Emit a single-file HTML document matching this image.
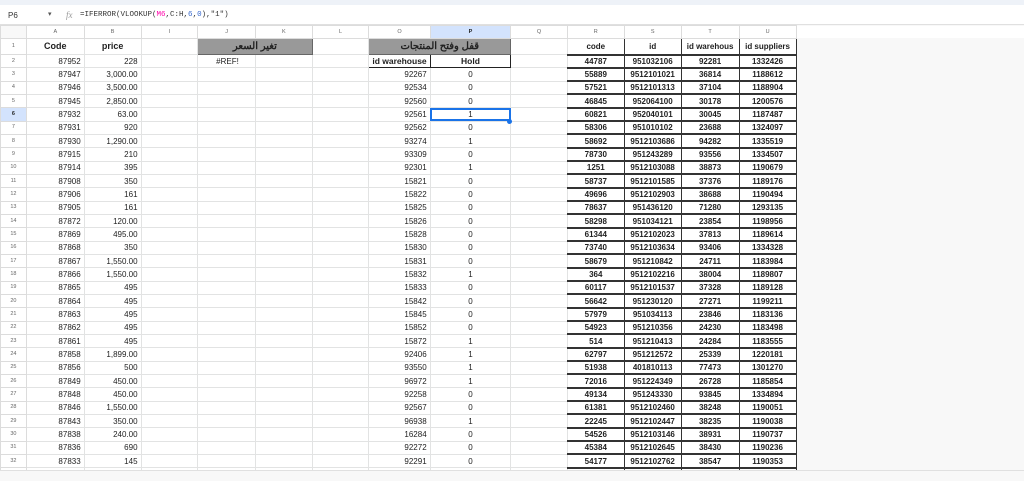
<!DOCTYPE html>
<html><head><meta charset="utf-8"><style>
*{margin:0;padding:0;box-sizing:border-box}
body{width:1024px;height:481px;overflow:hidden;background:#fff;font-family:"Liberation Sans",Arial,sans-serif;position:relative}
.top{position:absolute;left:0;top:0;width:1024px;height:5px;background:#eef2f8}
.fb{position:absolute;left:0;top:5px;width:1024px;height:20px;background:#fff;border-bottom:1px solid #e0e0e0;font-size:8px;color:#333}
.fb .nm{position:absolute;left:8px;top:6px}
.fb .ar{position:absolute;left:48px;top:5px;font-size:7px;color:#555}
.fb .fx{position:absolute;left:66px;top:5px;font-style:italic;color:#999;font-family:"Liberation Serif",serif;font-size:9px}
.fb .f{position:absolute;left:80px;top:6px;font-family:"Liberation Mono",monospace;font-size:7.5px}
.fb .f b{font-weight:normal;color:#f0a}
.fb .f i{font-style:normal;color:#36c}
.grid{position:absolute;left:0;top:25px;width:1024px;height:445px;overflow:hidden;background:#f8f8f8}
table{border-collapse:collapse;table-layout:fixed;font-size:8px;color:#222}
td,th{border:1px solid #e2e3e3;height:13.33px;padding:0 3px;white-space:nowrap;overflow:hidden;text-align:right;font-weight:normal;background:#fff;line-height:11px}
th{background:#fff;color:#666;text-align:center;font-size:5.5px;border-color:#dcdcdc}
tr.h th{height:13px}
tr.h th.sel{background:#d3e3fd;color:#222;font-weight:bold}
tr.r1 td,tr.r1 th{height:16px}
tr td.c,tr td:nth-child(9){text-align:center}
.gr{background:#999!important;text-align:center!important;font-weight:bold;font-size:10px;border-color:#666!important;font-family:"Liberation Sans","Noto Sans CJK SC",sans-serif}
.bb{text-align:center!important;font-weight:bold;border:1px solid #222!important;font-size:8.5px}
td.k{text-align:center;font-weight:bold;border:1px solid #333;border-bottom:2px solid #333;font-size:8px}
.hd{font-weight:bold;font-size:9px;text-align:center!important}
.sc{outline:2px solid #1a73e8;outline-offset:-2px;text-align:center!important}
td.e{background:#f8f8f8;border-color:#f8f8f8}
.sb{position:absolute;left:0;top:470px;width:1024px;height:11px;background:#f8f8f8;border-top:1px solid #e0e0e0}
</style></head><body>
<div class="top"></div>
<div class="fb"><span class="nm">P6</span><span class="ar">▾</span><span class="fx">fx</span><span class="f">=IFERROR(VLOOKUP(<b>M6</b>,C:H,<i>6</i>,<i>0</i>),"1")</span></div>
<div class="grid"><table>
<colgroup><col style="width:26px"><col style="width:58px"><col style="width:57px"><col style="width:57px"><col style="width:58px"><col style="width:57px"><col style="width:57px"><col style="width:58px"><col style="width:81px"><col style="width:57px"><col style="width:57px"><col style="width:57px"><col style="width:58px"><col style="width:57px"><col style="width:229px"></colgroup>
<tr class="h"><th style="background:#f8f8f8"></th><th>A</th><th>B</th><th>I</th><th>J</th><th>K</th><th>L</th><th>O</th><th class="sel">P</th><th>Q</th><th>R</th><th>S</th><th>T</th><th>U</th><th style="border:none;background:#fff"></th></tr>
<tr class="r1"><th>1</th><td class="hd">Code</td><td class="hd">price</td><td></td><td colspan="2" class="gr">تغير السعر</td><td></td><td colspan="2" class="gr">قفل وفتح المنتجات</td><td></td><td class="k">code</td><td class="k">id</td><td class="k">id warehous</td><td class="k">id suppliers</td><td class="e"></td></tr>
<tr><th>2</th><td>87952</td><td>228</td><td></td><td style="text-align:left;padding-left:18px">#REF!</td><td></td><td></td><td class="bb">id warehouse</td><td class="bb">Hold</td><td></td><td class="k">44787</td><td class="k">951032106</td><td class="k">92281</td><td class="k">1332426</td><td class="e"></td></tr>
<tr><th>3</th><td>87947</td><td>3,000.00</td><td></td><td></td><td></td><td></td><td>92267</td><td>0</td><td></td><td class="k">55889</td><td class="k">9512101021</td><td class="k">36814</td><td class="k">1188612</td><td class="e"></td></tr>
<tr><th>4</th><td>87946</td><td>3,500.00</td><td></td><td></td><td></td><td></td><td>92534</td><td>0</td><td></td><td class="k">57521</td><td class="k">9512101313</td><td class="k">37104</td><td class="k">1188904</td><td class="e"></td></tr>
<tr><th>5</th><td>87945</td><td>2,850.00</td><td></td><td></td><td></td><td></td><td>92560</td><td>0</td><td></td><td class="k">46845</td><td class="k">952064100</td><td class="k">30178</td><td class="k">1200576</td><td class="e"></td></tr>
<tr><th style="background:#d3e3fd;color:#222;font-weight:bold">6</th><td>87932</td><td>63.00</td><td></td><td></td><td></td><td></td><td>92561</td><td class="sc">1</td><td></td><td class="k">60821</td><td class="k">952040101</td><td class="k">30045</td><td class="k">1187487</td><td class="e"></td></tr>
<tr><th>7</th><td>87931</td><td>920</td><td></td><td></td><td></td><td></td><td>92562</td><td>0</td><td></td><td class="k">58306</td><td class="k">951010102</td><td class="k">23688</td><td class="k">1324097</td><td class="e"></td></tr>
<tr><th>8</th><td>87930</td><td>1,290.00</td><td></td><td></td><td></td><td></td><td>93274</td><td>1</td><td></td><td class="k">58692</td><td class="k">9512103686</td><td class="k">94282</td><td class="k">1335519</td><td class="e"></td></tr>
<tr><th>9</th><td>87915</td><td>210</td><td></td><td></td><td></td><td></td><td>93309</td><td>0</td><td></td><td class="k">78730</td><td class="k">951243289</td><td class="k">93556</td><td class="k">1334507</td><td class="e"></td></tr>
<tr><th>10</th><td>87914</td><td>395</td><td></td><td></td><td></td><td></td><td>92301</td><td>1</td><td></td><td class="k">1251</td><td class="k">9512103088</td><td class="k">38873</td><td class="k">1190679</td><td class="e"></td></tr>
<tr><th>11</th><td>87908</td><td>350</td><td></td><td></td><td></td><td></td><td>15821</td><td>0</td><td></td><td class="k">58737</td><td class="k">9512101585</td><td class="k">37376</td><td class="k">1189176</td><td class="e"></td></tr>
<tr><th>12</th><td>87906</td><td>161</td><td></td><td></td><td></td><td></td><td>15822</td><td>0</td><td></td><td class="k">49696</td><td class="k">9512102903</td><td class="k">38688</td><td class="k">1190494</td><td class="e"></td></tr>
<tr><th>13</th><td>87905</td><td>161</td><td></td><td></td><td></td><td></td><td>15825</td><td>0</td><td></td><td class="k">78637</td><td class="k">951436120</td><td class="k">71280</td><td class="k">1293135</td><td class="e"></td></tr>
<tr><th>14</th><td>87872</td><td>120.00</td><td></td><td></td><td></td><td></td><td>15826</td><td>0</td><td></td><td class="k">58298</td><td class="k">951034121</td><td class="k">23854</td><td class="k">1198956</td><td class="e"></td></tr>
<tr><th>15</th><td>87869</td><td>495.00</td><td></td><td></td><td></td><td></td><td>15828</td><td>0</td><td></td><td class="k">61344</td><td class="k">9512102023</td><td class="k">37813</td><td class="k">1189614</td><td class="e"></td></tr>
<tr><th>16</th><td>87868</td><td>350</td><td></td><td></td><td></td><td></td><td>15830</td><td>0</td><td></td><td class="k">73740</td><td class="k">9512103634</td><td class="k">93406</td><td class="k">1334328</td><td class="e"></td></tr>
<tr><th>17</th><td>87867</td><td>1,550.00</td><td></td><td></td><td></td><td></td><td>15831</td><td>0</td><td></td><td class="k">58679</td><td class="k">951210842</td><td class="k">24711</td><td class="k">1183984</td><td class="e"></td></tr>
<tr><th>18</th><td>87866</td><td>1,550.00</td><td></td><td></td><td></td><td></td><td>15832</td><td>1</td><td></td><td class="k">364</td><td class="k">9512102216</td><td class="k">38004</td><td class="k">1189807</td><td class="e"></td></tr>
<tr><th>19</th><td>87865</td><td>495</td><td></td><td></td><td></td><td></td><td>15833</td><td>0</td><td></td><td class="k">60117</td><td class="k">9512101537</td><td class="k">37328</td><td class="k">1189128</td><td class="e"></td></tr>
<tr><th>20</th><td>87864</td><td>495</td><td></td><td></td><td></td><td></td><td>15842</td><td>0</td><td></td><td class="k">56642</td><td class="k">951230120</td><td class="k">27271</td><td class="k">1199211</td><td class="e"></td></tr>
<tr><th>21</th><td>87863</td><td>495</td><td></td><td></td><td></td><td></td><td>15845</td><td>0</td><td></td><td class="k">57979</td><td class="k">951034113</td><td class="k">23846</td><td class="k">1183136</td><td class="e"></td></tr>
<tr><th>22</th><td>87862</td><td>495</td><td></td><td></td><td></td><td></td><td>15852</td><td>0</td><td></td><td class="k">54923</td><td class="k">951210356</td><td class="k">24230</td><td class="k">1183498</td><td class="e"></td></tr>
<tr><th>23</th><td>87861</td><td>495</td><td></td><td></td><td></td><td></td><td>15872</td><td>1</td><td></td><td class="k">514</td><td class="k">951210413</td><td class="k">24284</td><td class="k">1183555</td><td class="e"></td></tr>
<tr><th>24</th><td>87858</td><td>1,899.00</td><td></td><td></td><td></td><td></td><td>92406</td><td>1</td><td></td><td class="k">62797</td><td class="k">951212572</td><td class="k">25339</td><td class="k">1220181</td><td class="e"></td></tr>
<tr><th>25</th><td>87856</td><td>500</td><td></td><td></td><td></td><td></td><td>93550</td><td>1</td><td></td><td class="k">51938</td><td class="k">401810113</td><td class="k">77473</td><td class="k">1301270</td><td class="e"></td></tr>
<tr><th>26</th><td>87849</td><td>450.00</td><td></td><td></td><td></td><td></td><td>96972</td><td>1</td><td></td><td class="k">72016</td><td class="k">951224349</td><td class="k">26728</td><td class="k">1185854</td><td class="e"></td></tr>
<tr><th>27</th><td>87848</td><td>450.00</td><td></td><td></td><td></td><td></td><td>92258</td><td>0</td><td></td><td class="k">49134</td><td class="k">951243330</td><td class="k">93845</td><td class="k">1334894</td><td class="e"></td></tr>
<tr><th>28</th><td>87846</td><td>1,550.00</td><td></td><td></td><td></td><td></td><td>92567</td><td>0</td><td></td><td class="k">61381</td><td class="k">9512102460</td><td class="k">38248</td><td class="k">1190051</td><td class="e"></td></tr>
<tr><th>29</th><td>87843</td><td>350.00</td><td></td><td></td><td></td><td></td><td>96938</td><td>1</td><td></td><td class="k">22245</td><td class="k">9512102447</td><td class="k">38235</td><td class="k">1190038</td><td class="e"></td></tr>
<tr><th>30</th><td>87838</td><td>240.00</td><td></td><td></td><td></td><td></td><td>16284</td><td>0</td><td></td><td class="k">54526</td><td class="k">9512103146</td><td class="k">38931</td><td class="k">1190737</td><td class="e"></td></tr>
<tr><th>31</th><td>87836</td><td>690</td><td></td><td></td><td></td><td></td><td>92272</td><td>0</td><td></td><td class="k">45384</td><td class="k">9512102645</td><td class="k">38430</td><td class="k">1190236</td><td class="e"></td></tr>
<tr><th>32</th><td>87833</td><td>145</td><td></td><td></td><td></td><td></td><td>92291</td><td>0</td><td></td><td class="k">54177</td><td class="k">9512102762</td><td class="k">38547</td><td class="k">1190353</td><td class="e"></td></tr>
<tr><th>33</th><td>87832</td><td>145.00</td><td></td><td></td><td></td><td></td><td>92292</td><td>1</td><td></td><td class="k">58521</td><td class="k">9512102100</td><td class="k">38686</td><td class="k">1190494</td><td class="e"></td></tr>
</table></div>
<div style="position:absolute;left:507px;top:119px;width:5px;height:5px;border-radius:50%;background:#1a73e8"></div>
<div class="sb"></div>
</body></html>
